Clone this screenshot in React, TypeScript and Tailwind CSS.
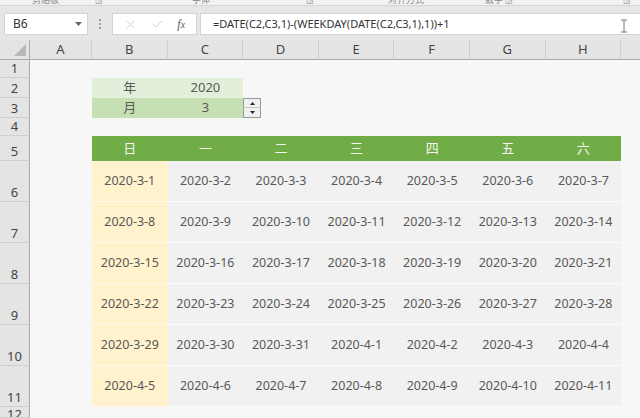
import { X, Check } from "lucide-react";

const font = { fontFamily: '"Noto Sans", "Noto Sans CJK SC", sans-serif' };

const heads = ["日", "一", "二", "三", "四", "五", "六"];

const weeks = [
  ["2020-3-1", "2020-3-2", "2020-3-3", "2020-3-4", "2020-3-5", "2020-3-6", "2020-3-7"],
  ["2020-3-8", "2020-3-9", "2020-3-10", "2020-3-11", "2020-3-12", "2020-3-13", "2020-3-14"],
  ["2020-3-15", "2020-3-16", "2020-3-17", "2020-3-18", "2020-3-19", "2020-3-20", "2020-3-21"],
  ["2020-3-22", "2020-3-23", "2020-3-24", "2020-3-25", "2020-3-26", "2020-3-27", "2020-3-28"],
  ["2020-3-29", "2020-3-30", "2020-3-31", "2020-4-1", "2020-4-2", "2020-4-3", "2020-4-4"],
  ["2020-4-5", "2020-4-6", "2020-4-7", "2020-4-8", "2020-4-9", "2020-4-10", "2020-4-11"],
];

const cols = ["A", "B", "C", "D", "E", "F", "G", "H"];

function RowHead({ n, top = false }: { n: number; top?: boolean }) {
  return (
    <div
      className={
        "flex justify-center overflow-hidden bg-[#e4e4e4] border-r border-b border-r-[#ababab] border-b-[#cfcfcf] text-[13px] leading-none text-[#444] " +
        (top ? "items-start pt-[1px]" : "items-end pb-[2px]")
      }
    >
      {n}
    </div>
  );
}

function Blank({ span = 9 }: { span?: number }) {
  return <div style={{ gridColumn: `span ${span} / span ${span}` }} />;
}

export default function App() {
  return (
    <div className="w-[640px] h-[418px] overflow-hidden bg-[#f7f7f7] text-[#595959]" style={font}>
      {/* ribbon remnants */}
      <div className="relative h-[6px] bg-[#f2f2f2] border-b border-[#d6d6d6] overflow-hidden text-[9px] text-[#8a8a8a]">
        <span className="absolute left-[32px] -top-[7px]">剪贴板</span>
        <span className="absolute left-[95px] -top-[6px] text-[8px]">◲</span>
        <span className="absolute left-[192px] -top-[7px]">字体</span>
        <span className="absolute left-[306px] -top-[6px] text-[8px]">◲</span>
        <span className="absolute left-[388px] -top-[7px]">对齐方式</span>
        <span className="absolute left-[485px] -top-[7px]">数字</span>
        <span className="absolute left-[505px] -top-[6px] text-[8px]">◲</span>
        <span className="absolute left-[623px] -top-[6px] text-[8px]">◲</span>
      </div>

      {/* formula bar */}
      <div className="h-[34px] bg-[#e6e6e6] flex items-start pt-[7px] pl-[4px]">
        <div className="w-[84px] h-[22px] bg-white border border-[#d4d4d4] flex items-center justify-between pl-[8px] pr-[5px] text-[12px] text-[#333]">
          <span>B6</span>
          <svg width="7" height="4" viewBox="0 0 7 4"><path d="M0 0h7L3.5 4z" fill="#666" /></svg>
        </div>
        <div className="w-[24px] h-[22px] flex flex-col items-center justify-center gap-[2px]">
          <span className="w-[2px] h-[2px] bg-[#a0a0a0]" />
          <span className="w-[2px] h-[2px] bg-[#a0a0a0]" />
          <span className="w-[2px] h-[2px] bg-[#a0a0a0]" />
        </div>
        <div className="w-[85px] h-[22px] bg-white border border-[#d4d4d4] flex items-center justify-around px-[4px] text-[#c4c4c4]">
          <X size={13} strokeWidth={1.5} />
          <Check size={13} strokeWidth={1.5} />
          <span className="italic text-[#555] text-[12px]" style={{ fontFamily: '"Liberation Serif", serif' }}>
            f<span className="text-[10px]">x</span>
          </span>
        </div>
        <div className="ml-[3px] flex-1 h-[22px] bg-white border border-[#d4d4d4] border-r-0 flex items-center pl-[12px] pr-[12px] text-[11px] text-[#333]">
          <span className="flex-1">=DATE(C2,C3,1)-(WEEKDAY(DATE(C2,C3,1),1))+1</span>
          <svg width="8" height="14" viewBox="0 0 8 14" className="mt-[4px]">
            <path d="M1 1h6M4 1v12M1 13h6" stroke="#777" strokeWidth="1" fill="none" />
          </svg>
        </div>
      </div>

      {/* sheet */}
      <div className="grid grid-cols-[30px_62px_repeat(7,75.6px)_1fr] grid-rows-[20px_18px_20px_20px_18px_25px_repeat(6,41px)_1fr] h-[378px]">
        {/* column headers */}
        <div className="bg-[#e4e4e4] border-r border-b border-[#ababab] relative overflow-hidden">
          <svg width="12" height="12" viewBox="0 0 12 12" className="absolute right-[3px] bottom-[3px]">
            <path d="M12 0V12H0z" fill="#b8b8b8" />
          </svg>
        </div>
        {cols.map((c) => (
          <div key={c} className="bg-[#e4e4e4] border-r border-b border-r-[#cfcfcf] border-b-[#ababab] flex items-center justify-center text-[13px] text-[#444]">
            {c}
          </div>
        ))}
        <div className="bg-[#e4e4e4] border-b border-[#ababab]" />

        {/* row 1 */}
        <RowHead n={1} />
        <Blank />

        {/* row 2 */}
        <RowHead n={2} />
        <div />
        <div className="bg-[#e2efda] flex items-center justify-center text-[13px]">年</div>
        <div className="bg-[#e2efda] flex items-center justify-center text-[13px]">2020</div>
        <Blank span={6} />

        {/* row 3 */}
        <RowHead n={3} />
        <div />
        <div className="bg-[#c6e0b4] flex items-center justify-center text-[13px]">月</div>
        <div className="bg-[#c6e0b4] flex items-center justify-center text-[13px]">3</div>
        <div className="relative">
          <div className="absolute left-0 top-0 w-[18px] h-[20px] flex flex-col">
            <div className="h-[10px] bg-[#f0f0f0] border border-[#9a9a9a] border-b-[#c8c8c8] flex items-center justify-center">
              <svg width="5" height="3" viewBox="0 0 5 3"><path d="M2.5 0L5 3H0z" fill="#222" /></svg>
            </div>
            <div className="h-[10px] bg-[#f0f0f0] border border-t-0 border-[#9a9a9a] flex items-center justify-center">
              <svg width="5" height="3" viewBox="0 0 5 3"><path d="M0 0h5L2.5 3z" fill="#222" /></svg>
            </div>
          </div>
        </div>
        <Blank span={5} />

        {/* row 4 */}
        <RowHead n={4} />
        <Blank />

        {/* row 5: weekday heads */}
        <RowHead n={5} />
        <div />
        {heads.map((h) => (
          <div key={h} className="bg-[#70ad47] flex items-center justify-center text-[13px] text-[#f4f4f4]">
            {h}
          </div>
        ))}
        <div />

        {weeks.map((w, i) => (
          <div key={i} className="contents">
            <RowHead n={i + 6} />
            <div />
            {w.map((d, j) => (
              <div
                key={d}
                className={
                  "flex items-center justify-center text-[12.5px] border-b border-white/70 " +
                  (j === 0 ? "bg-[#fff2cc]" : "bg-[#f1f1f1]")
                }
              >
                {d}
              </div>
            ))}
            <div />
          </div>
        ))}

        {/* row 12 */}
        <RowHead n={12} top />
        <Blank />
      </div>
    </div>
  );
}
